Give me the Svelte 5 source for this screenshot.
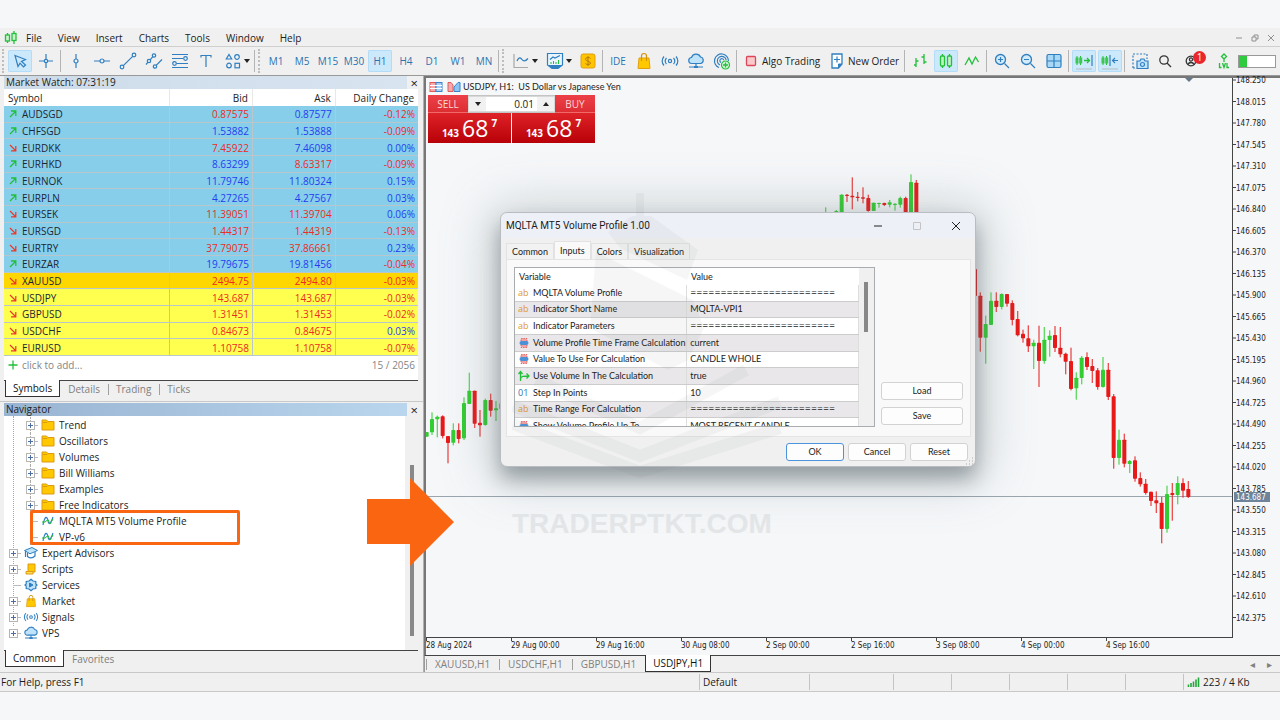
<script lang="ts">
  type Bar = [number, number, number, number];

  const menus = ['File', 'View', 'Insert', 'Charts', 'Tools', 'Window', 'Help'];
  const frames = ['M1', 'M5', 'M15', 'M30', 'H1', 'H4', 'D1', 'W1', 'MN'];

  let frame = $state('H1');
  let volume = $state('0.01');

  // symbol, direction, bid, bid up, ask, ask up, change, change up, row colour
  const quotes: [string, boolean, string, boolean, string, boolean, string, boolean, string][] = [
    ['AUDSGD', true, '0.87575', false, '0.87577', true, '-0.12%', false, 'sky'],
    ['CHFSGD', true, '1.53882', true, '1.53888', true, '-0.09%', false, 'sky'],
    ['EURDKK', false, '7.45922', false, '7.46098', true, '0.00%', true, 'sky'],
    ['EURHKD', true, '8.63299', true, '8.63317', false, '-0.09%', false, 'sky'],
    ['EURNOK', true, '11.79746', true, '11.80324', true, '0.15%', true, 'sky'],
    ['EURPLN', true, '4.27265', true, '4.27567', true, '0.03%', true, 'sky'],
    ['EURSEK', false, '11.39051', false, '11.39704', false, '0.06%', true, 'sky'],
    ['EURSGD', false, '1.44317', false, '1.44319', false, '-0.13%', false, 'sky'],
    ['EURTRY', false, '37.79075', false, '37.86661', false, '0.23%', true, 'sky'],
    ['EURZAR', true, '19.79675', true, '19.81456', true, '-0.04%', false, 'sky'],
    ['XAUUSD', false, '2494.75', false, '2494.80', false, '-0.03%', false, 'gold'],
    ['USDJPY', false, '143.687', false, '143.687', false, '-0.03%', false, 'lemon'],
    ['GBPUSD', false, '1.31451', false, '1.31453', false, '-0.02%', false, 'lemon'],
    ['USDCHF', false, '0.84673', false, '0.84675', false, '0.03%', true, 'lemon'],
    ['EURUSD', false, '1.10758', false, '1.10758', false, '-0.07%', false, 'lemon'],
  ];

  const tree = [
    { label: 'Trend', icon: 'folder', level: 2, open: true },
    { label: 'Oscillators', icon: 'folder', level: 2, open: true },
    { label: 'Volumes', icon: 'folder', level: 2, open: true },
    { label: 'Bill Williams', icon: 'folder', level: 2, open: true },
    { label: 'Examples', icon: 'folder', level: 2, open: true },
    { label: 'Free Indicators', icon: 'folder', level: 2, open: true },
    { label: 'MQLTA MT5 Volume Profile', icon: 'indicator', level: 2, open: false },
    { label: 'VP-v6', icon: 'indicator', level: 2, open: false },
    { label: 'Expert Advisors', icon: 'expert', level: 1, open: true },
    { label: 'Scripts', icon: 'script', level: 1, open: true },
    { label: 'Services', icon: 'service', level: 1, open: false },
    { label: 'Market', icon: 'bagSmall', level: 1, open: true },
    { label: 'Signals', icon: 'signalSmall', level: 1, open: true },
    { label: 'VPS', icon: 'cloudSmall', level: 1, open: true },
  ];

  const rule = '========================';
  const inputs = [
    ['ab', 'MQLTA Volume Profile', rule],
    ['ab', 'Indicator Short Name', 'MQLTA-VPI1'],
    ['ab', 'Indicator Parameters', rule],
    ['enum', 'Volume Profile Time Frame Calculation', 'current'],
    ['enum', 'Value To Use For Calculation', 'CANDLE WHOLE'],
    ['bool', 'Use Volume In The Calculation', 'true'],
    ['01', 'Step In Points', '10'],
    ['ab', 'Time Range For Calculation', rule],
    ['enum', 'Show Volume Profile Up To', 'MOST RECENT CANDLE'],
  ];

  // Bars are [high, open, close, low] as depths below `top`, in thirds of a pixel.
  const runs: { left: number; top: number; bars: Bar[] }[] = [
    {
      left: 2,
      top: 786,
      bars: [
        [276, 290, 276, 290], [217, 277, 237, 285], [227, 238, 230, 292], [226, 229, 288, 295],
        [288, 288, 309, 370], [250, 308, 270, 316], [250, 270, 297, 310], [172, 295, 189, 300],
        [98, 192, 152, 192], [152, 152, 251, 264], [210, 248, 256, 290], [176, 255, 180, 257],
        [161, 180, 212, 230], [183, 211, 205, 243], [190, 207, 190, 207],
      ],
    },
    { left: 1199, top: 246, bars: [[142, 170, 165, 170]] },
    {
      left: 1231,
      top: 246,
      bars: [
        [150, 170, 153, 170], [102, 165, 104, 170], [102, 104, 108, 126], [52, 107, 112, 148],
        [96, 110, 114, 124], [82, 112, 116, 130], [104, 114, 153, 155], [128, 153, 128, 153],
        [128, 132, 129, 143], [128, 129, 135, 138], [120, 134, 127, 142], [130, 135, 131, 152],
        [110, 134, 114, 143], [110, 114, 170, 170], [43, 170, 66, 170], [60, 68, 170, 170],
      ],
    },
    {
      left: 1647,
      top: 546,
      bars: [
        [27, 27, 108, 108], [97, 107, 233, 275], [167, 233, 192, 311], [97, 195, 122, 195],
        [97, 122, 141, 156], [100, 141, 102, 148], [102, 102, 131, 140], [121, 129, 180, 196],
        [153, 177, 226, 229], [209, 221, 235, 248], [196, 235, 259, 276], [239, 259, 248, 327],
        [197, 248, 303, 381], [201, 303, 239, 311], [211, 240, 227, 290], [198, 225, 264, 276],
        [201, 263, 283, 292], [278, 281, 305, 343], [263, 303, 387, 391], [337, 385, 353, 419],
        [288, 354, 293, 373], [277, 291, 321, 330], [297, 318, 333, 369], [324, 331, 381, 389],
        [291, 381, 329, 383], [309, 329, 411, 420], [402, 409, 594, 626], [509, 594, 539, 614],
        [521, 539, 611, 622], [600, 612, 603, 639], [589, 601, 656, 665], [637, 654, 673, 680],
        [657, 671, 699, 704], [695, 695, 723, 738], [694, 721, 730, 759], [711, 728, 807, 850],
        [677, 807, 702, 818], [669, 699, 705, 782], [649, 705, 669, 733], [655, 669, 692, 713],
        [663, 687, 711, 714],
      ],
    },
  ];

  const prices = Array.from({ length: 26 }, (_, i) => (148.25 - i * 0.235).toFixed(3));
  const times = [
    '28 Aug 2024', '29 Aug 00:00', '29 Aug 16:00', '30 Aug 08:00', '2 Sep 00:00',
    '2 Sep 16:00', '3 Sep 08:00', '4 Sep 00:00', '4 Sep 16:00',
  ];

  const blue = 'fill="none" stroke="#2f7fc1" stroke-width="1.2"';
  const green = 'fill="none" stroke="#22c03a" stroke-width="1.3"';
  const dark = 'fill="none" stroke="#333" stroke-width="1.3"';

  const bag = `<path d="M-6 7.500 L-5-3 H5 L6 7.500Z" fill="#ffc800" stroke="#e0a010"/><path d="M-2.500 0V-5a2.500 2.500 0 0 1 5 0V0" fill="none" stroke="#d29310" stroke-width="1.2"/>`;
  const signal = `<g ${blue}><circle r="1.600"/><path d="M-3.500-3a4.500 4.500 0 0 0 0 6M3.500-3a4.500 4.500 0 0 1 0 6M-6-4.500a6.500 6.500 0 0 0 0 9M6-4.500a6.500 6.500 0 0 1 0 9"/></g>`;
  const cloud = `<path d="M-4 2.500a3 3 0 0 1-.5-6 4.800 4.800 0 0 1 9-.5 3.300 3.300 0 0 1 0 6.500Z" fill="#bfe3fb" stroke="#2f7fc1" stroke-width="1.200"/><path d="M0 3V6M-7 6H7" stroke="#2f7fc1" stroke-width="1.200"/><rect x="-2" y="5" width="4" height="2" fill="#2f7fc1"/>`;

  // Every drawing is centred on 0,0.
  const icons: Record<string, string> = {
    cursor: `<path d="M-5-5.500 5.500-1.500 1.500.5 5.500 4 3.500 5.800 0 2.200-2 5.500Z" ${blue}/>`,
    cross: `<g ${blue}><circle r="1.700"/><path d="M0-7V-2M0 2V7M-7 0H-2M2 0H7"/></g>`,
    vline: `<g ${blue}><circle r="2"/><path d="M0-7V-2M0 2V7"/></g>`,
    hline: `<g ${blue}><circle r="2"/><path d="M-8 0H-2M2 0H8"/></g>`,
    trend: `<g ${blue}><circle cx="-6" cy="6" r="1.800"/><circle cx="6" cy="-6" r="1.800"/><path d="M-4.700 4.700 4.700-4.700"/></g>`,
    channel: `<g ${blue}><circle cx="0" cy="-5.500" r="1.700"/><circle cx="-5" cy="0" r="1.700"/><circle cx="1" cy="5.500" r="1.700"/><path d="M-1.200-4.300-3.800-1.200M-6 1.200-8 3.500M2.200 4.300 8-1.500"/></g>`,
    fibo: `<g ${blue}><path d="M-8-6.500H8M-8-2.500H3M-3.500 2.500H8M-8 6.500H8"/><circle cx="5.500" cy="-2.500" r="1.800"/><circle cx="-5.500" cy="2.500" r="1.800"/></g>`,
    text: `<path d="M-5-3.500V-5.500H5V-3.500M0-5.500V6" ${blue}/>`,
    shapes: `<g ${blue}><path d="M-4-6.500-1.300-2H-6.700Z"/><circle cx="4" cy="-4" r="2.300"/><circle cx="-4" cy="4.500" r="2.300"/><rect x="2" y="2.300" width="4.500" height="4.500"/></g>`,
    chart: `<path d="M-7-7V6.500H7" fill="none" stroke="#a8a8a8" stroke-width="1.200"/><path d="M-4 0C-2-5 0-3 1-1.500S4 1 7-2.500" ${blue}/>`,
    indicators: `<path d="M-7.500-7.500H7.500V4L3 7.500H-3L-7.500 4Z" fill="#eaf5fd" stroke="#2f7fc1" stroke-width="1.200"/><path d="M-7 4H7L3 7.500H-3Z" fill="#2f7fc1"/><path d="M-5-1.500-2-4 0-3 5-5.500" ${blue}/><path d="M-4 3V1M-1.500 3V0M1 3V1M3.500 3V-1" stroke="#22c03a"/>`,
    dollar: `<rect x="-7" y="-7" width="14" height="14" rx="2" fill="#ffc400" stroke="#e0a010"/><path d="M2.500-2.500C1.500-4-2.500-4-2.500-1.800S2.500 0 2.500 2-1.500 4-2.500 2.500M0-5V5" fill="none" stroke="#b57b0a"/>`,
    bag, signal, cloud,
    radar: `<g ${blue}><path d="M-3 6.500A7 7 0 1 1 6.500 0M-2 4A4.500 4.500 0 1 1 4.200-1M-1 1.500A2 2 0 1 1 1.800-.8"/></g><circle cx="3.500" cy="4" r="4" fill="#d8f7dc" stroke="#22c03a" stroke-width="1.200"/><path d="M1 4H6M3.500 1.500V6.500" stroke="#22c03a" stroke-width="1.300"/>`,
    algo: `<rect x="-4.500" y="-4.500" width="9" height="9" rx="1" fill="#fbc9c9" stroke="#d9485a" stroke-width="1.300"/>`,
    order: `<path d="M-5-7H5V3L1.500 7H-5Z" fill="#fff" stroke="#2f7fc1" stroke-width="1.300"/><path d="M5 3H1.500V7" fill="#2f7fc1" stroke="#2f7fc1"/><path d="M-3-1.500H3M0-4.500V1.500" stroke="#2f7fc1" stroke-width="1.200"/>`,
    bars: `<path d="M-4-3V6M-6 4H-4M-4 0H-1.500M4-7V3M1.500-4H4M4 1H6.500" ${green}/>`,
    candles: `<g fill="#bff3c4" stroke="#22c03a" stroke-width="1.300"><path d="M-3.500-7V7M3.500-7V7"/><rect x="-5.500" y="-5" width="4" height="10" rx="1"/><rect x="1.500" y="-5" width="4" height="10" rx="1"/></g>`,
    wave: `<path d="M-7 4-3-3 0 3 3.500-4 6.500 1" ${green}/>`,
    zoomIn: `<circle cx="-1.500" cy="-1.500" r="5" fill="#d3ebfb" stroke="#2f7fc1" stroke-width="1.300"/><path d="M2.500 2.500 7 7M-4-1.500H1M-1.500-4V1" ${blue}/>`,
    zoomOut: `<circle cx="-1.500" cy="-1.500" r="5" fill="#d3ebfb" stroke="#2f7fc1" stroke-width="1.300"/><path d="M2.500 2.500 7 7M-4-1.500H1" ${blue}/>`,
    tiles: `<rect x="-7" y="-6.500" width="14" height="13" rx="1.500" fill="#a9d8f7" stroke="#2f7fc1" stroke-width="1.200"/><path d="M0-6.500V6.500M-7 0H7" ${blue}/>`,
    scroll: `<path d="M-7-5V4M-3.500-5V4" stroke="#22c03a"/><rect x="-8.500" y="-3.500" width="3" height="6" fill="#3cc652"/><rect x="-4.800" y="-3.500" width="3" height="6" fill="#3cc652"/><path d="M0-.5H5M3-3 5.500-.5 3 2" ${green}/><path d="M8-6V5" ${blue}/><path d="M-8 8H8" stroke="#b4bcc2"/>`,
    shift: `<path d="M-7-5V4M-3.500-5V4" stroke="#22c03a"/><rect x="-8.500" y="-3.500" width="3" height="6" fill="#3cc652"/><rect x="-4.800" y="-3.500" width="3" height="6" fill="#3cc652"/><path d="M0-6V5M8-.5H3M5-3 2.500-.5 5 2" ${blue}/><path d="M-8 8H8" stroke="#b4bcc2"/>`,
    camera: `<path d="M-7 7V-7H7V-2M-7 7H-4" fill="none" stroke="#2f7fc1" stroke-width="1.200" stroke-dasharray="2 1.500"/><path d="M-3 0H0L1-2H4L5 0H8V7.500H-3Z" fill="#bfe3fb" stroke="#2f7fc1" stroke-width="1.200"/><circle cx="2.500" cy="3.500" r="2" ${blue}/>`,
    search: `<circle cx="-2" cy="-1" r="4.200" ${dark}/><path d="M1 2 5 6" ${dark}/>`,
    person: `<circle cx="-4" cy="0" r="4.800" ${dark}/><circle cx="-4" cy="-1.500" r="1.600" ${dark}/><path d="M-7 3.500C-6 .8-2 .8-1 3.500" ${dark}/>`,
    level: `<path d="M0-7 2.500-4.500 0-2-2.500-4.500ZM0-2V1M-4.500 2V6.500H-2.500M-1.500 2 0 6.500 1.500 2M3 2V6.500H5" ${green}/>`,
    folder: `<path d="M-6 5V-5H-1.500L0-3.500H6V5Z" fill="#ffc800" stroke="#dd9a10"/><path d="M-5.500-2.500H-1L0-3.500" fill="none" stroke="#dd9a10"/>`,
    indicator: `<path d="M-5 4C-3-6-1-5 0 0S3 2 5-4" ${blue}/><path d="M-6 1-3 1 0-1.500 2 3 5-2" fill="none" stroke="#22c03a"/>`,
    expert: `<path d="M-6.500-2.500 1-5.500 6.500-2.500-1 .8Z" fill="#bfe3fb" stroke="#2f7fc1"/><path d="M-3.500 0V3.500C-1 5.500 2 5 4 3V-1M-5.500-2V4" ${blue}/>`,
    script: `<path d="M-3-5H4V3H-3Z" fill="#ffc800" stroke="#dd9a10"/><path d="M-5 2.500H2V5H-5Z" fill="#ffdc50" stroke="#dd9a10"/>`,
    service: `<path d="M0-5.800 2-4 4.800-3.500 4.800-1 6 0 4.800 1 4.800 3.500 2 4 0 5.800-2 4-4.800 3.500-4.800 1-6 0-4.800-1-4.800-3.500-2-4Z" fill="#bfe3fb" stroke="#2f7fc1" stroke-width="1.200"/><path d="M-1.500-2 2 0-1.500 2Z" fill="#2f7fc1" stroke="#2f7fc1"/>`,
    bagSmall: `<g transform="scale(.75)">${bag}</g>`,
    signalSmall: `<g transform="scale(.85)">${signal}</g>`,
    cloudSmall: `<g transform="scale(.85)">${cloud}</g>`,
    up: `<path d="M-3 3 2.500-2.500M-2-3H2.800V2" ${green}/>`,
    down: `<path d="M-3-3 2.500 2.500M2.800-2V2.800H-2" fill="none" stroke="#e8392c" stroke-width="1.200"/>`,
    plus: `<path d="M-4.500 0H4.500M0-4.500V4.500" ${green}/>`,
    enum: `<path d="M-3-4.500H3V4.500H-3Z" fill="#f4a0a0" stroke="#e07070" stroke-dasharray="1.500 1"/><rect x="-4.500" y="-2" width="9" height="4" rx="2" fill="#4a92d8"/>`,
    bool: `<path d="M-3.500 5V-4M-5.500-2-3.500-4.500-1.500-2M-3.500 3C-3.500 0 0 0 4.500 0M2.500-2.500 5 0 2.500 2.500" ${green}/>`,
    logo: `<g fill="#c9f5cd" stroke="#22c03a" stroke-width="1.300"><path d="M-3.500-5V5M3-7V6"/><rect x="-5.500" y="-3" width="4" height="6"/><rect x="1" y="-4.500" width="4" height="7"/></g>`,
    depth: `<rect x="-6" y="-4.500" width="6" height="9" fill="#f7a9a9" stroke="#dc5c5c"/><rect x="0" y="-4.500" width="6" height="9" fill="#a9cff3" stroke="#3b84c8"/><path d="M-6-1.500H6M-6 1.500H6" stroke="#fff"/>`,
    oneClick: `<path d="M-6-4.500H-3L-1-2V4.500H-6Z" fill="#f7a9a9" stroke="#dc5c5c"/><path d="M0 4.500V0L4-4.500H6V4.500Z" fill="#8cc4f3" stroke="#3b84c8"/>`,
    strength: `<path d="M-5 5V2.500M-2.500 5V1M0 5V-.5M2.500 5V-2.500M5 5V-4.500" stroke="#22a83a" stroke-width="1.600"/>`,
  };

  const group1 = ['cursor', 'cross', '|', 'vline', 'hline', 'trend', 'channel', 'fibo', 'text'];
  const group2 = ['bag', 'signal', 'cloud', 'radar'];
  const group3 = [
    'bars', 'candles', 'wave', '|', 'zoomIn', 'zoomOut', 'tiles', '|',
    'scroll', 'shift', '|', 'camera', 'search',
  ];
  const pressed = ['cursor', 'candles', 'scroll', 'shift'];
</script>

{#snippet icon(name: string, w = 22, h = 20)}
  <svg class="icon" width={w} height={h} viewBox="{-w / 2} {-h / 2} {w} {h}" aria-hidden="true">
    {@html icons[name]}
  </svg>
{/snippet}

{#snippet tools(names: string[])}
  {#each names as name}
    {#if name === '|'}
      <span class="sep"></span>
    {:else}
      <button class="tool" class:pressed={pressed.includes(name)} aria-label={name}>
        {@render icon(name)}
      </button>
    {/if}
  {/each}
{/snippet}

<div class="app">
  <header>
    <nav class="menu">
      <span class="logo">{@render icon('logo')}</span>
      {#each menus as item}
        <button>{item}</button>
      {/each}
      <div class="window-buttons">
        <button aria-label="Minimize"><svg viewBox="0 0 8 8"><path d="M1 4H7" /></svg></button>
        <button aria-label="Restore"><svg viewBox="0 0 8 8"><path d="M1 3H5V7H1ZM3 3V1H7V5H5" /></svg></button>
        <button aria-label="Close"><svg viewBox="0 0 8 8"><path d="M1 1 7 7M7 1 1 7" /></svg></button>
      </div>
    </nav>

    <div class="toolbar">
      <span class="grip"></span>
      {@render tools(group1)}
      <button class="tool drop" aria-label="Shapes">{@render icon('shapes')}<i class="caret"></i></button>
      <span class="sep"></span>
      <span class="grip"></span>
      {#each frames as f}
        <button class="tool word" class:pressed={frame === f} onclick={() => (frame = f)}>{f}</button>
      {/each}
      <span class="sep"></span>
      <span class="grip"></span>
      <button class="tool drop" aria-label="Chart type">{@render icon('chart')}<i class="caret"></i></button>
      <button class="tool drop" aria-label="Indicators">{@render icon('indicators')}<i class="caret"></i></button>
      {@render tools(['dollar', '|'])}
      <button class="tool word">IDE</button>
      {@render tools(group2)}
      <span class="sep"></span>
      <button class="tool labelled algo">{@render icon('algo')}Algo Trading</button>
      <button class="tool labelled order">{@render icon('order')}New Order</button>
      <span class="sep"></span>
      {@render tools(group3)}
      <button class="tool account" aria-label="Account">{@render icon('person')}<b class="badge">1</b></button>
      {@render tools(['level'])}
      <span class="meter"><i></i></span>
    </div>
  </header>

  <div class="work">
    <aside>
      <section class="market">
        <div class="title">
          <h2>Market Watch: 07:31:19</h2>
          <button aria-label="Close market watch">×</button>
        </div>
        <table class="quotes">
          <thead>
            <tr><th>Symbol</th><th>Bid</th><th>Ask</th><th>Daily Change</th></tr>
          </thead>
          <tbody>
            {#each quotes as [symbol, rising, bid, bidUp, ask, askUp, change, changeUp, tone]}
              <tr class={tone}>
                <td><span class="symbol">{@render icon(rising ? 'up' : 'down', 18, 12)}{symbol}</span></td>
                <td class:up={bidUp}>{bid}</td>
                <td class:up={askUp}>{ask}</td>
                <td class:up={changeUp}>{change}</td>
              </tr>
            {/each}
          </tbody>
        </table>
        <div class="add">
          <button>{@render icon('plus', 18, 12)}click to add...</button>
          <span>15 / 2056</span>
        </div>
        <div class="tabs">
          <button class="on">Symbols</button>
          <button>Details</button>
          <button>Trading</button>
          <button>Ticks</button>
        </div>
      </section>

      <section class="navigator">
        <div class="title active">
          <h2>Navigator</h2>
          <button aria-label="Close navigator">×</button>
        </div>
        <div class="tree-box">
          <ul class="tree">
            {#each tree as node}
              <li class:deep={node.level === 2}>
                <span class="knot" class:box={node.open}></span>
                {@render icon(node.icon, 20, 16)}
                <span>{node.label}</span>
              </li>
            {/each}
          </ul>
          <span class="highlight"></span>
          <div class="scroll"><i></i></div>
        </div>
        <div class="tabs">
          <button class="on">Common</button>
          <button>Favorites</button>
        </div>
      </section>
    </aside>

    <main>
      <div class="chart">
        <div class="plot">
          <svg class="candles" aria-label="USDJPY candlestick chart">
            <path class="price-line" d="M0 418.500H2000" />
            {#each runs as run}
              <g transform="scale({1 / 3}) translate({run.left} {run.top})">
                {#each run.bars as [high, open, close, low], i}
                  <g class={close < open ? 'bull' : 'bear'}>
                    <rect class="wick" x={i * 16 - 2} y={high} width="4" height={low - high} />
                    <rect
                      x={i * 16 - 6}
                      y={Math.min(open, close)}
                      width="12"
                      height={Math.abs(open - close)}
                      rx="2"
                    />
                  </g>
                {/each}
              </g>
            {/each}
          </svg>

          <div class="caption">
            {@render icon('depth', 18, 14)}
            {@render icon('oneClick', 18, 14)}
            <span>USDJPY, H1:&nbsp; US Dollar vs Japanese Yen</span>
          </div>

          <div class="deal">
            <div class="deal-top">
              <button class="side">SELL</button>
              <div class="volume">
                <button aria-label="Less"><i class="caret"></i></button>
                <input aria-label="Volume" bind:value={volume} />
                <button aria-label="More"><i class="caret flip"></i></button>
              </div>
              <button class="side">BUY</button>
            </div>
            <div class="deal-prices">
              <button><small>143</small><b>68</b><sup>7</sup></button>
              <button><small>143</small><b>68</b><sup>7</sup></button>
            </div>
          </div>
          <i class="shift-mark"></i>
        </div>

        <svg class="prices">
          {#each prices as price, i}
            <path d="M0 {2 + i * 21.5}h3" />
            <text x="3" y={5 + i * 21.5}>{price}</text>
          {/each}
          <rect y="414" x="1" width="36" height="10" />
          <text class="now" x="3" y="422">143.687</text>
        </svg>

        <div class="times">
          {#each times as time}
            <span>{time}</span>
          {/each}
        </div>

        <section class="dialog" aria-label="MQLTA MT5 Volume Profile 1.00">
          <div class="dialog-title">
            <h1>MQLTA MT5 Volume Profile 1.00</h1>
            <button aria-label="Minimize"><svg viewBox="0 0 10 10"><path d="M1 5H9" /></svg></button>
            <button aria-label="Maximize" disabled><svg viewBox="0 0 10 10"><path d="M1.500 1.500H8.500V8.500H1.500Z" /></svg></button>
            <button aria-label="Close dialog"><svg viewBox="0 0 10 10"><path d="M1 1 9 9M9 1 1 9" /></svg></button>
          </div>
          <div class="dialog-tabs">
            <button>Common</button>
            <button class="on">Inputs</button>
            <button>Colors</button>
            <button>Visualization</button>
          </div>
          <div class="page">
            <div class="list">
              <div class="list-body">
                <div class="list-head"><span>Variable</span><span>Value</span></div>
                <table>
                  <tbody>
                    {#each inputs as [kind, label, value]}
                      <tr>
                        <td>
                          <span class="variable">
                            {#if kind === 'ab' || kind === '01'}
                              <b class:number={kind === '01'}>{kind}</b>
                            {:else}
                              {@render icon(kind, 12, 12)}
                            {/if}
                            {label}
                          </span>
                        </td>
                        <td class:rule={value === rule}>{value}</td>
                      </tr>
                    {/each}
                  </tbody>
                </table>
              </div>
              <div class="list-scroll"><i></i></div>
            </div>
            <div class="file-buttons">
              <button class="push">Load</button>
              <button class="push">Save</button>
            </div>
          </div>
          <div class="dialog-foot">
            <button class="push main">OK</button>
            <button class="push">Cancel</button>
            <button class="push">Reset</button>
          </div>
          <svg class="size-grip" viewBox="0 0 8 8">
            <path d="M6 1h1M6 4h1M3 4h1M6 7h1M3 7h1M0 7h1" />
          </svg>
        </section>

        <div class="watermark">
          <svg viewBox="4 0 280 290" aria-hidden="true">
            <path d="M128 5H136V28H143L190 62 179 92 112 60 100 44 124 28H128Z" />
            <path d="M88 64 185 112 196 140 180 172 160 182 82 140Z" />
            <path class="band" d="M28 192 132 240 238 182M5 218 132 268 272 214M5 236 132 284 272 240" />
          </svg>
          <span>TRADERPTKT.COM</span>
        </div>
      </div>

      <div class="tabs chart-tabs">
        <button>XAUUSD,H1</button>
        <button>USDCHF,H1</button>
        <button>GBPUSD,H1</button>
        <button class="on">USDJPY,H1</button>
        <span class="arrows"><i>◂</i><i>▸</i></span>
      </div>
    </main>
    <svg class="pointer" viewBox="0 0 87 88" aria-hidden="true">
      <path d="M0 21H43V0L87 44 43 88V66H0Z" />
    </svg>
  </div>

  <footer>
    <span class="help">For Help, press F1</span>
    <span class="profile">Default</span>
    <span></span>
    <span></span>
    <span></span>
    <span></span>
    <span></span>
    <span></span>
    <span class="traffic">{@render icon('strength', 19, 12)}223 / 4 Kb</span>
  </footer>
</div>

<style>
  :global(body) {
    background: #f5f7f9;
  }

  .app {
    --ui: 'Open Sans', sans-serif;
    --small: 'DejaVu Sans Condensed', 'DejaVu Sans', sans-serif;
    --face: #f0f0f0;
    --line: #c8c8c8;
    display: flex;
    flex-direction: column;
    box-sizing: border-box;
    min-height: 100vh;
    padding: 28px 0;
    font: 10px/12px var(--ui);
    color: #1c1c1c;
  }

  .app *,
  .app *::before {
    box-sizing: border-box;
  }

  button,
  input {
    margin: 0;
    padding: 0;
    border: 0;
    background: none;
    font: inherit;
    color: inherit;
  }

  h1,
  h2 {
    margin: 0;
    font-size: inherit;
    font-weight: 400;
  }

  .icon {
    flex: none;
  }

  .caret {
    border: 3px solid transparent;
    border-top: 4px solid #222;
    border-bottom: 0;
  }

  .flip {
    transform: rotate(180deg);
  }

  /* menu and toolbar */
  header {
    background: var(--face);
    border-bottom: 1px solid #999;
  }

  .menu {
    display: flex;
    align-items: center;
    height: 19px;
    padding-top: 2px;
    border-bottom: 1px solid #cfcfcf;
  }

  .menu > button {
    margin-right: 16px;
  }

  .logo {
    display: flex;
    width: 26px;
  }

  .window-buttons {
    display: flex;
    gap: 8px;
    margin-left: auto;
    padding-right: 5px;
  }

  .window-buttons button {
    display: flex;
  }

  .window-buttons svg {
    width: 8px;
    height: 8px;
    fill: none;
    stroke: #909090;
  }

  .toolbar {
    display: flex;
    align-items: center;
    gap: 2px;
    height: 28px;
    padding-left: 2px;
  }

  .grip {
    width: 4px;
    height: 24px;
    border-left: 2px dotted #bdbdbd;
  }

  .sep {
    width: 2px;
    height: 22px;
    border-left: 1px solid #b4b4b4;
  }

  .tool {
    display: flex;
    flex: none;
    align-items: center;
    justify-content: center;
    width: 24px;
    height: 22px;
    border-radius: 2px;
  }

  .pressed {
    background: #cce8fb;
    box-shadow: inset 0 0 0 1px #b2dcf8;
  }

  .word {
    color: #2b74b0;
  }

  .drop {
    width: 32px;
  }

  .labelled {
    justify-content: flex-start;
    white-space: nowrap;
  }

  .algo {
    width: 84px;
  }

  .order {
    width: 76px;
  }

  .account {
    position: relative;
    width: 30px;
  }

  .badge {
    position: absolute;
    top: 1px;
    right: 4px;
    width: 13px;
    border-radius: 7px;
    background: #e8262c;
    color: #fff;
    font-weight: 400;
    line-height: 13px;
  }

  .meter {
    width: 38px;
    height: 13px;
    border: 1px solid #999;
    background: #fff;
  }

  .meter i {
    display: block;
    width: 8px;
    height: 11px;
    background: #2fcb3f;
  }

  /* side panels */
  .work {
    position: relative;
    display: grid;
    flex: 1;
    grid-template-columns: 424px 1fr;
    background: var(--face);
  }

  aside {
    display: flex;
    flex-direction: column;
    padding: 0 5px 0 4px;
    border-right: 1px solid #b0b0b0;
  }

  .title {
    display: flex;
    justify-content: space-between;
    height: 13px;
    padding: 0 0 0 2px;
    background: linear-gradient(90deg, #cddbe9, #d8e4f0) no-repeat 0 0 / calc(100% - 11px) 100%;
  }

  .title.active {
    background-image: linear-gradient(90deg, #99b4d1, #b9d6ee);
  }

  .title button {
    font-size: 13px;
    line-height: 12px;
  }

  .quotes {
    width: 100%;
    height: 267px;
    border-collapse: collapse;
    table-layout: fixed;
    background: #fff;
  }

  .quotes th {
    height: 17px;
    padding: 0 4px;
    border-right: 1px solid #e8e8e8;
    font-weight: 400;
    text-align: right;
  }

  .quotes th:first-child {
    width: 40%;
    text-align: left;
  }

  .quotes td {
    padding: 1px 3px 0;
    border-right: 1px solid #b9c6cc;
    border-bottom: 1px solid #b9c6cc;
    color: #ee2a22;
    text-align: right;
  }

  .quotes td:last-child,
  .quotes th:last-child {
    border-right: 0;
  }

  .quotes td:first-child {
    padding: 1px 0 0;
    color: #1c2630;
  }

  .quotes td.up {
    color: #1f3df0;
  }

  .symbol {
    display: flex;
    align-items: center;
  }

  .sky {
    background: #87ceeb;
  }

  .gold {
    background: #ffd700;
  }

  .lemon {
    background: #ffff50;
  }

  .add {
    display: flex;
    justify-content: space-between;
    height: 24px;
    padding: 3px 3px 0 0;
    background: #fff;
    color: #858585;
  }

  .add button {
    display: flex;
  }

  .tabs {
    display: flex;
    height: 21px;
    border-top: 1px solid #444;
    color: #808080;
  }

  .tabs button {
    position: relative;
    height: 16px;
    padding: 0 8px;
  }

  .tabs button:not(.on)::before {
    content: '';
    position: absolute;
    left: 0;
    top: 3px;
    height: 11px;
    border-left: 1px solid #a0a0a0;
  }

  .tabs .on {
    height: 17px;
    margin-top: -1px;
    border: 1px solid #333;
    border-top: 0;
    background: #fff;
    color: #111;
  }

  aside .tabs .on {
    margin-left: 1px;
    padding: 0 7px;
  }

  .tabs .on + button::before {
    display: none;
  }

  .navigator {
    display: flex;
    flex: 1;
    flex-direction: column;
    margin: 0 -5px 0 -4px;
    padding: 1px 5px 1px 4px;
    border-top: 1px solid var(--line);
  }

  .tree-box {
    position: relative;
    display: flex;
    flex: 1;
    justify-content: space-between;
    background: #fff;
  }

  .tree {
    position: relative;
    margin: 0;
    padding: 1px 0 0 5px;
    list-style: none;
  }

  .tree::before {
    content: '';
    position: absolute;
    top: 0;
    bottom: 24px;
    left: 9px;
    border-left: 1px dotted #aaa;
  }

  .tree li {
    position: relative;
    display: flex;
    align-items: center;
    height: 16px;
  }

  .tree .deep {
    padding-left: 17px;
  }

  .deep::before {
    content: '';
    position: absolute;
    top: 0;
    left: 21px;
    height: 16px;
    border-left: 1px dotted #aaa;
  }

  .tree .icon {
    margin-right: 1px;
  }

  .knot {
    position: relative;
    width: 12px;
    height: 9px;
    background: linear-gradient(#bbb, #bbb) no-repeat 4px 4px / 9px 1px;
  }

  .box::before {
    content: '';
    position: absolute;
    top: 0;
    left: 0;
    width: 9px;
    height: 9px;
    border: 1px solid #b5b5b5;
    background:
      linear-gradient(#4a6fa5, #4a6fa5) no-repeat center / 5px 1px,
      linear-gradient(#4a6fa5, #4a6fa5) no-repeat center / 1px 5px,
      #fff;
  }

  .highlight {
    position: absolute;
    top: 94px;
    left: 26px;
    width: 210px;
    height: 35px;
    border: 3px solid #f96511;
    border-radius: 2px;
  }

  .scroll {
    width: 13px;
    padding: 49px 4px 14px 5px;
    background: var(--face);
  }

  .scroll i {
    display: block;
    height: 100%;
    background: #888;
  }

  .pointer {
    position: absolute;
    top: 402px;
    left: 367px;
    width: 87px;
    height: 88px;
    fill: #f96511;
  }

  /* chart */
  main {
    display: flex;
    flex-direction: column;
    min-width: 0;
  }

  .chart {
    position: relative;
    display: grid;
    flex: 1;
    grid-template: 1fr 17px / 1fr 47px;
    border: 1px solid #777;
    border-width: 2px 0 0 2px;
    background: #f5f7f9;
  }

  .plot {
    position: relative;
    border-right: 1px solid #444;
    border-bottom: 1px solid #444;
  }

  .candles {
    position: absolute;
    width: 100%;
    height: 100%;
  }

  .price-line {
    stroke: #9aa5ae;
  }

  .bull {
    fill: #32cd32;
  }

  .bear {
    fill: #e81919;
  }

  .wick {
    opacity: 0.75;
  }

  .caption {
    position: relative;
    display: flex;
    align-items: center;
    height: 17px;
    padding-left: 1px;
    font: 9px/13px Lato, sans-serif;
    color: #222;
  }

  .deal {
    position: relative;
    width: 167px;
    margin-left: 2px;
    color: #fff;
  }

  .deal-top {
    display: grid;
    grid-template-columns: 40px 1fr 40px;
    height: 18px;
  }

  .side {
    background: linear-gradient(#ec4048, #dd2e34);
    color: #fbd9d9;
    border-bottom: 1px solid #f06a6a;
  }

  .volume {
    display: grid;
    grid-template-columns: 17px 1fr 17px;
    padding: 1px;
    border: 1px solid #c4c4c4;
    border-width: 1px 0;
    background: #d8d8d8;
    color: #222;
  }

  .volume button {
    display: flex;
    align-items: center;
    justify-content: center;
    background: #f1f1f1;
  }

  .volume input {
    width: 100%;
    padding-right: 3px;
    background: #fff;
    text-align: right;
  }

  .deal-prices {
    display: grid;
    grid-template-columns: 1fr 1fr;
    gap: 1px;
  }

  .deal-prices button {
    display: flex;
    align-items: baseline;
    justify-content: center;
    gap: 3px;
    height: 30px;
    background: linear-gradient(#de2328, #b80008);
  }

  .deal-prices small {
    font-size: 10px;
    font-weight: 700;
  }

  .deal-prices b {
    font: 23px/30px var(--ui);
  }

  .deal-prices sup {
    align-self: flex-start;
    font-size: 10px;
    font-weight: 700;
    line-height: 20px;
  }

  .shift-mark {
    position: absolute;
    top: 0;
    right: 39px;
    border: 4px solid transparent;
    border-top: 4px solid #66788a;
    border-bottom: 0;
  }

  .prices {
    width: 47px;
    height: 100%;
    overflow: visible;
    font: 8px var(--small);
    fill: #222;
  }

  .prices path {
    stroke: #444;
  }

  .prices rect {
    fill: #6f8499;
  }

  .prices .now {
    fill: #fff;
  }

  .times {
    display: flex;
    grid-column: 1 / -1;
    font: 8px/16px var(--small);
    color: #222;
    white-space: nowrap;
    overflow: hidden;
  }

  .times span {
    flex: none;
    width: 85px;
    background: linear-gradient(#444, #444) no-repeat 0 0 / 1px 3px;
  }

  .chart-tabs {
    height: 17px;
    padding-left: 1px;
    border-left: 1px solid #999;
  }

  .chart-tabs button {
    padding: 0 9px;
  }

  .chart-tabs .on {
    padding: 0 7px;
  }

  .chart-tabs .on + .arrows {
    margin-left: auto;
  }

  .arrows {
    display: flex;
    gap: 12px;
    padding-right: 8px;
    line-height: 16px;
  }

  .arrows i {
    font-style: normal;
  }

  /* indicator settings window */
  .dialog {
    position: absolute;
    top: 134px;
    left: 74px;
    width: 476px;
    border: 1px solid #b9bcc0;
    border-radius: 7px;
    background: #f0f0f0;
    box-shadow:
      0 12px 20px rgba(60, 75, 80, 0.42),
      0 4px 50px 8px rgba(110, 125, 130, 0.34);
    font: 9px/12px Lato, sans-serif;
  }

  .dialog-title {
    display: flex;
    align-items: center;
    gap: 29px;
    height: 25px;
    padding: 0 14px 0 5px;
    border-radius: 7px 7px 0 0;
    background: #eef0f8;
    font: 10px/12px Roboto, sans-serif;
  }

  .dialog-title h1 {
    margin-right: auto;
  }

  .dialog-title button {
    display: flex;
  }

  .dialog-title svg {
    width: 10px;
    height: 10px;
    fill: none;
    stroke: #222;
  }

  .dialog-title button:disabled svg {
    stroke: #c4c4c8;
  }

  .dialog-tabs {
    display: flex;
    align-items: flex-end;
    height: 21px;
    padding-left: 5px;
  }

  .dialog-tabs button {
    height: 16px;
    padding: 0 5px;
    border: 1px solid #e2e2e2;
    border-bottom: 0;
    background: #f2f2f2;
  }

  .dialog-tabs .on {
    height: 18px;
    background: #f9f9f9;
  }

  .page {
    display: flex;
    gap: 6px;
    margin: 0 4px 0 5px;
    padding: 7px 7px 9px;
    border: 1px solid #e4e4e4;
    background: #f9f9f9;
  }

  .list {
    display: flex;
    flex: 1;
    height: 160px;
    border: 1px solid #a9adb0;
    background: #f0f0f0;
    overflow: hidden;
  }

  .list-body {
    flex: 1;
  }

  .list-head {
    display: grid;
    grid-template-columns: 1fr 1fr;
    height: 17px;
    padding-left: 4px;
    background: #fff;
    line-height: 18px;
  }

  .list-head span + span {
    padding-left: 2px;
  }

  .list table {
    width: 100%;
    height: 150px;
    border-collapse: collapse;
    table-layout: fixed;
    background: #fff;
  }

  .list td {
    padding: 0 0 0 3px;
    border-bottom: 1px solid #ccc;
    border-right: 1px solid #ddd;
    white-space: nowrap;
  }

  .list tr:nth-child(even) {
    background: #e9e7e9;
  }

  .list .rule {
    font: 8px/12px var(--small);
  }

  .variable {
    display: flex;
    align-items: center;
  }

  .variable b {
    width: 15px;
    color: #e0972a;
    font: 9px/12px var(--ui);
  }

  .variable .number {
    color: #2b74b0;
  }

  .variable .icon {
    margin-right: 3px;
  }

  .list-scroll {
    width: 15px;
    padding: 14px 5px;
  }

  .list-scroll i {
    display: block;
    width: 4px;
    height: 50px;
    background: #888;
  }

  .push {
    width: 58px;
    height: 18px;
    border: 1px solid #d2d2d2;
    border-radius: 3px;
    background: #fdfdfd;
  }

  .push.main {
    border-color: #4a94dc;
  }

  .file-buttons {
    display: flex;
    flex-direction: column;
    justify-content: flex-end;
    gap: 7px;
    padding-bottom: 2px;
  }

  .file-buttons .push {
    width: 82px;
  }

  .dialog-foot {
    display: flex;
    justify-content: flex-end;
    gap: 4px;
    padding: 6px 7px 5px;
  }

  .size-grip {
    position: absolute;
    right: 1px;
    bottom: 1px;
    width: 8px;
    height: 8px;
    stroke: #aaa;
  }

  .watermark {
    position: absolute;
    top: 110px;
    left: 86px;
    display: flex;
    flex-direction: column;
    gap: 30px;
    color: #dfe2e4;
    font: bold 28px/32px 'Liberation Sans', sans-serif;
    opacity: 0.8;
    pointer-events: none;
  }

  .watermark svg {
    width: 280px;
    height: 290px;
    fill: rgba(120, 130, 125, 0.08);
  }

  .watermark .band {
    fill: none;
    stroke: rgba(120, 130, 125, 0.08);
    stroke-width: 12px;
  }

  footer {
    display: flex;
    align-items: center;
    height: 20px;
    border: 1px solid var(--line);
    border-width: 1px 0;
    background: var(--face);
  }

  footer span {
    display: flex;
    flex: none;
    align-items: center;
    width: 58px;
    height: 16px;
    padding-left: 3px;
    border-left: 1px solid #c4c4c4;
  }

  footer .help {
    flex: 1;
    padding-left: 1px;
    border: 0;
  }

  footer .profile {
    width: 110px;
  }

  footer .profile + span {
    width: 84px;
  }

  footer .traffic {
    width: 97px;
    padding-left: 0;
  }
</style>
